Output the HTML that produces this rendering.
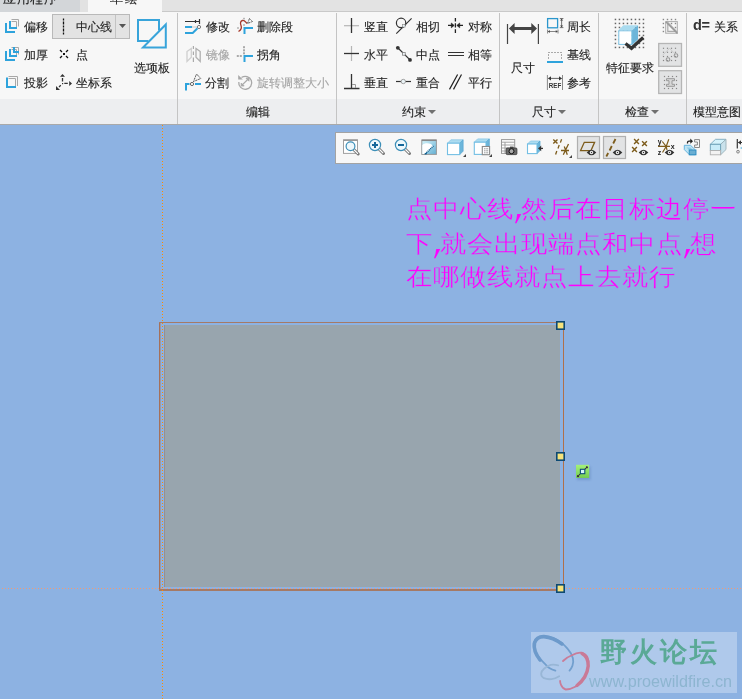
<!DOCTYPE html>
<html><head><meta charset="utf-8">
<style>
html,body{margin:0;padding:0;width:742px;height:699px;overflow:hidden;background:#8db2e2;font-family:"Liberation Sans",sans-serif;}
.a{position:absolute;}
.t{position:absolute;will-change:transform;font-size:12px;line-height:12px;color:#222;white-space:nowrap;-webkit-text-stroke:0.12px #222;}
.dis{color:#a5a5a5;-webkit-text-stroke-color:#a5a5a5;}
svg{position:absolute;overflow:visible;}
#tabs{position:absolute;left:0;top:0;width:742px;height:12px;background:#e3e3e3;}
#ribbon{position:absolute;left:0;top:12px;width:742px;height:112px;background:#f7f7f7;}
#lbar{position:absolute;left:0;top:99px;width:742px;height:25px;background:#edeef0;}
#rbot{position:absolute;left:0;top:124px;width:742px;height:1px;background:#a9a9a9;}
.sep{position:absolute;top:13px;width:1px;height:111px;background:#c4c4c4;}
.lbl{position:absolute;will-change:transform;top:106px;font-size:12px;line-height:12px;color:#222;white-space:nowrap;-webkit-text-stroke:0.12px #222;}
.tri{display:inline-block;width:0;height:0;border-left:4px solid transparent;border-right:4px solid transparent;border-top:4px solid #707070;vertical-align:middle;margin-left:2px;position:relative;top:-1px;}
.note{position:absolute;left:406px;color:#ff00ff;-webkit-text-stroke:0.4px #8db2e2;font-size:24px;line-height:24px;font-weight:300;white-space:nowrap;}
.note i{font-style:normal;display:inline-block;text-align:center;}
.nch{width:27px;transform:scaleX(1.1);}
.ncs{position:static;display:inline-block;vertical-align:top;overflow:visible;}
.note i{vertical-align:top;}
</style></head><body>
<!-- tabs -->
<div id="tabs"></div>
<div class="a" style="left:0;top:0;width:80px;height:12px;background:#d3d6d9"></div>
<div class="a" style="left:80px;top:0;width:8px;height:12px;background:#e2e2e2"></div>
<div class="a" style="left:88px;top:0;width:74px;height:12px;background:#f7f7f7"></div>
<div class="a" style="left:162px;top:11px;width:580px;height:1px;background:#c9c9c9"></div>
<div class="t" style="left:3px;top:-8px;font-size:13px;line-height:13px;letter-spacing:0.5px">应用程序</div>
<div class="t" style="left:110px;top:-8px;font-size:13px;line-height:13px;letter-spacing:2px">草绘</div>

<div id="ribbon"></div>
<div id="lbar"></div>
<div id="rbot"></div>
<div class="sep" style="left:177px"></div>
<div class="sep" style="left:336px"></div>
<div class="sep" style="left:499px"></div>
<div class="sep" style="left:598px"></div>
<div class="sep" style="left:686px"></div>

<div class="a" style="left:52px;top:14px;width:76px;height:23px;border:1px solid #b9b9b9;background:#e3e3e3"></div>
<div class="a" style="left:115px;top:15px;width:1px;height:23px;background:#c3c3c3"></div>
<svg class="a" style="left:0;top:0" width="742" height="699" viewBox="0 0 742 699">
<g fill="none" stroke-linecap="butt">
  <!-- 偏移 -->
  <path d="M11.5 19.5H18.5V26.5M11.5 21.5H16.5V27" stroke="#a8a8a8" stroke-width="1"/>
  <path d="M6 23V32H15M10 21V28H17" stroke="#2ea3dc" stroke-width="2"/>
  <!-- 加厚 -->
  <path d="M11.5 47.5H18.5V54.5M11.5 49.5H16.5V55" stroke="#a8a8a8" stroke-width="1"/>
  <path d="M6 51V60H15M10 49V56H17M14 47V52H19" stroke="#2ea3dc" stroke-width="2"/>
  <!-- 投影 -->
  <path d="M8.5 76.5H17.5V86M8.5 78.5H15.5V86" stroke="#a8a8a8" stroke-width="1"/>
  <path d="M7 77.5V87H16" stroke="#2ea3dc" stroke-width="2"/>
  <!-- 中心线 dotted -->
  <path d="M63.5 18.5V20.5M63.5 21.5V24.5M63.5 25.5V27.5M63.5 28.5V31.5M63.5 32.5V34.5" stroke="#111" stroke-width="1.3"/>
  <path d="M119 24H126L122.5 28Z" fill="#555" stroke="none"/>
  <!-- 点 -->
  <path d="M60 50L62 52M68 50L66 52M60 58L62 56M68 58L66 56" stroke="#111" stroke-width="1.3"/>
  <rect x="63" y="53" width="2" height="2" fill="#111" stroke="none"/>
  <!-- 坐标系 -->
  <path d="M60 76.8H65L62.5 74Z M69.2 81L72 83.4L69.2 86Z M56 86L56 90L60 90Z" fill="#333" stroke="none"/>
  <path d="M62.5 78V81.5M64.3 83.4H67.8M60.8 85.3L59 87" stroke="#333" stroke-width="1.3"/>
  <rect x="62" y="83" width="1.2" height="1.2" fill="#333" stroke="none"/>
  <!-- 选项板 -->
  <path d="M148.5 41H138V20H159V30.5" stroke="#38a4da" stroke-width="2"/>
  <path d="M143 47.6H165.8V24.5Z" stroke="#38a4da" stroke-width="2" stroke-linejoin="miter"/>
  <!-- 修改 -->
  <path d="M185 21.5H199.5M195.5 20V23M199.5 19V24" stroke="#333" stroke-width="1.2"/>
  <path d="M185 27H192M185 33H192.7L197.5 28.3" stroke="#2ea3dc" stroke-width="2"/>
  <path d="M192.5 27H197" stroke="#999" stroke-width="1" stroke-dasharray="1 1"/>
  <circle cx="199" cy="27" r="1.6" fill="#fff" stroke="#777" stroke-width="1"/>
  <!-- 删除段 -->
  <path d="M238.5 31.5C241 30 242 28 241 25.5C240 23 240.5 21 242.5 20.5C244.5 20 245.5 22 247 23.5" stroke="#a63a2c" stroke-width="1.3"/>
  <path d="M249.5 18.5L252.5 21.5L247.5 23.5Z" stroke="#333" stroke-width="1" stroke-dasharray="1 0.7"/>
  <rect x="243.2" y="17.8" width="1.6" height="1.6" fill="#aaa" stroke="none"/>
  <rect x="243.2" y="24.2" width="1.6" height="1.6" fill="#aaa" stroke="none"/>
  <rect x="237.2" y="27.2" width="1.6" height="1.6" fill="#aaa" stroke="none"/>
  <path d="M244.5 34V28H253" stroke="#2ea3dc" stroke-width="2"/>
  <!-- 镜像 -->
  <path d="M193.4 46V49M193.4 51.5V55M193.4 57.5V62" stroke="#aaa" stroke-width="1.2"/>
  <path d="M187 51.5L191.3 48.5V57.2L187 61.5Z" stroke="#cfcfcf" stroke-width="1.3"/>
  <path d="M200.2 51.5L196 48.5V57.2L200.2 61.5Z" stroke="#b0b0b0" stroke-width="1.3"/>
  <!-- 拐角 -->
  <rect x="243" y="46.2" width="2" height="2" fill="#aaa" stroke="none"/>
  <rect x="243" y="49.3" width="2" height="2" fill="#aaa" stroke="none"/>
  <rect x="243" y="52.3" width="2" height="2" fill="#aaa" stroke="none"/>
  <rect x="236.8" y="55" width="2" height="2" fill="#aaa" stroke="none"/>
  <rect x="239.8" y="55" width="2" height="2" fill="#aaa" stroke="none"/>
  <path d="M244.5 62V56H253" stroke="#2ea3dc" stroke-width="2"/>
  <!-- 分割 -->
  <path d="M186 90.5V84H189.5M195 84H201" stroke="#2ea3dc" stroke-width="2"/>
  <circle cx="192" cy="84" r="1.6" fill="#fff" stroke="#666" stroke-width="1"/>
  <path d="M196.5 74L200.8 78.5L193.5 81.5Z" stroke="#333" stroke-width="1" stroke-dasharray="1 0.7"/>
  <!-- 旋转调整大小 -->
  <path d="M241.5 77.5A6.5 6.5 0 1 1 238.8 82" stroke="#a8a8a8" stroke-width="1.3"/>
  <path d="M238.2 75V79.6H242.8Z" fill="#a8a8a8" stroke="none"/>
  <path d="M242 85.2L248.2 79" stroke="#a8a8a8" stroke-width="1.2"/>
  <path d="M246 78.2H249V81.2Z M241.2 83V86H244.2Z" fill="#a8a8a8" stroke="#a8a8a8" stroke-width="0.8"/>
  <!-- 竖直 水平 垂直 -->
  <path d="M344 25.7H359" stroke="#b5b5b5" stroke-width="1.2"/>
  <path d="M351.5 18V33" stroke="#333" stroke-width="1.3"/>
  <path d="M351.5 46V61" stroke="#b5b5b5" stroke-width="1.2"/>
  <path d="M344 53.5H359" stroke="#333" stroke-width="1.3"/>
  <path d="M351.5 74V88.5M344 88.5H359.5" stroke="#333" stroke-width="1.3"/>
  <path d="M352 84.5H355.5V88" stroke="#999" stroke-width="1"/>
  <!-- 相切 -->
  <circle cx="401.1" cy="22.9" r="4.7" stroke="#333" stroke-width="1.2"/>
  <path d="M396.3 33.6L411.6 18.3" stroke="#333" stroke-width="1.2"/>
  <rect x="402.5" y="24.5" width="2.6" height="2.6" fill="#eaf4f8" stroke="#888" stroke-width="0.6"/>
  <!-- 中点 -->
  <path d="M397.8 47.8L410 59.9" stroke="#333" stroke-width="1.2"/>
  <circle cx="397.8" cy="47.8" r="1.9" fill="#333" stroke="none"/>
  <circle cx="410" cy="59.9" r="1.9" fill="#333" stroke="none"/>
  <rect x="402.4" y="52.4" width="2.8" height="2.8" fill="#f0f6f8" stroke="#777" stroke-width="0.7"/>
  <!-- 重合 -->
  <path d="M396 81.5H411" stroke="#333" stroke-width="1.2"/>
  <circle cx="403.3" cy="81.5" r="2.2" fill="#eaf3f6" stroke="#999" stroke-width="0.9"/>
  <!-- 对称 -->
  <path d="M455.4 18V21.5M455.4 23.3V27.5M455.4 29.3V33" stroke="#222" stroke-width="1.3"/>
  <path d="M448 25.4H453M463 25.4H458" stroke="#222" stroke-width="1.3"/>
  <path d="M451.3 23L454.2 25.4L451.3 27.8Z M459.7 23L456.8 25.4L459.7 27.8Z" fill="#222" stroke="#222" stroke-width="0.6"/>
  <!-- 相等 -->
  <path d="M448 52.5H464M448 55.5H464" stroke="#333" stroke-width="1.2"/>
  <!-- 平行 -->
  <path d="M449.5 89.4L457.6 74.5M453.5 89.4L461.5 74.5" stroke="#222" stroke-width="1.2"/>
  <!-- 尺寸 big -->
  <path d="M507.5 24V44M538.4 24V44" stroke="#444" stroke-width="1.2"/>
  <path d="M514 28.5H532" stroke="#444" stroke-width="3"/>
  <path d="M508.9 28.5L514.6 23V34Z M537 28.5L531.3 23V34Z" fill="#444" stroke="none"/>
  <!-- 周长 -->
  <rect x="547.6" y="18.6" width="10" height="9.2" stroke="#2a96cc" stroke-width="1.3"/>
  <path d="M561.6 19V27.5M559.8 18.5H563.4M559.8 27.6H563.4" stroke="#666" stroke-width="0.9"/>
  <path d="M560 20.5H563.2L561.6 18.8Z M560 25.6H563.2L561.6 27.3Z" fill="#444" stroke="none"/>
  <path d="M548 31.5H557.5M547.6 29.5V33.5M558 29.5V33.5" stroke="#777" stroke-width="0.9"/>
  <path d="M549.8 30L548.1 31.5L549.8 33Z M555.8 30L557.5 31.5L555.8 33Z" fill="#444" stroke="none"/>
  <!-- 基线 -->
  <path d="M548 52.5H562" stroke="#aaa" stroke-width="1" stroke-dasharray="2 1"/>
  <path d="M548.5 54V60M561.5 54V60" stroke="#aaa" stroke-width="1" stroke-dasharray="2 1"/>
  <path d="M547 62H563" stroke="#2ea3dc" stroke-width="2"/>
  <!-- 参考 -->
  <path d="M547.4 75V90M562.5 75V90" stroke="#888" stroke-width="1"/>
  <path d="M548.5 78.4H561.5" stroke="#555" stroke-width="0.9"/>
  <path d="M548 78.4L551 76.2V80.6Z M562 78.4L559 76.2V80.6Z" fill="#333" stroke="none"/>
  <text x="548.8" y="88" font-family="Liberation Sans" font-weight="bold" font-size="6.3" fill="#333" stroke="none" textLength="12.4" lengthAdjust="spacingAndGlyphs">REF</text>
  <!-- 特征要求 dots -->
  <g fill="#777" stroke="none">
  </g>
</g>
</svg>


<svg class="a" style="left:0;top:0" width="742" height="699" viewBox="0 0 742 699">
 <g fill="#666"><rect x="614.7" y="18.7" width="1.5" height="1.5"/><rect x="614.7" y="22.7" width="1.5" height="1.5"/><rect x="614.7" y="26.7" width="1.5" height="1.5"/><rect x="614.7" y="30.7" width="1.5" height="1.5"/><rect x="614.7" y="34.7" width="1.5" height="1.5"/><rect x="614.7" y="38.7" width="1.5" height="1.5"/><rect x="614.7" y="42.7" width="1.5" height="1.5"/><rect x="614.7" y="46.7" width="1.5" height="1.5"/><rect x="618.7" y="18.7" width="1.5" height="1.5"/><rect x="618.7" y="22.7" width="1.5" height="1.5"/><rect x="618.7" y="26.7" width="1.5" height="1.5"/><rect x="618.7" y="30.7" width="1.5" height="1.5"/><rect x="618.7" y="34.7" width="1.5" height="1.5"/><rect x="618.7" y="38.7" width="1.5" height="1.5"/><rect x="618.7" y="42.7" width="1.5" height="1.5"/><rect x="618.7" y="46.7" width="1.5" height="1.5"/><rect x="622.7" y="18.7" width="1.5" height="1.5"/><rect x="622.7" y="22.7" width="1.5" height="1.5"/><rect x="622.7" y="26.7" width="1.5" height="1.5"/><rect x="622.7" y="30.7" width="1.5" height="1.5"/><rect x="622.7" y="34.7" width="1.5" height="1.5"/><rect x="622.7" y="38.7" width="1.5" height="1.5"/><rect x="622.7" y="42.7" width="1.5" height="1.5"/><rect x="622.7" y="46.7" width="1.5" height="1.5"/><rect x="626.7" y="18.7" width="1.5" height="1.5"/><rect x="626.7" y="22.7" width="1.5" height="1.5"/><rect x="626.7" y="26.7" width="1.5" height="1.5"/><rect x="626.7" y="30.7" width="1.5" height="1.5"/><rect x="626.7" y="34.7" width="1.5" height="1.5"/><rect x="626.7" y="38.7" width="1.5" height="1.5"/><rect x="626.7" y="42.7" width="1.5" height="1.5"/><rect x="626.7" y="46.7" width="1.5" height="1.5"/><rect x="630.7" y="18.7" width="1.5" height="1.5"/><rect x="630.7" y="22.7" width="1.5" height="1.5"/><rect x="630.7" y="26.7" width="1.5" height="1.5"/><rect x="630.7" y="30.7" width="1.5" height="1.5"/><rect x="630.7" y="34.7" width="1.5" height="1.5"/><rect x="630.7" y="38.7" width="1.5" height="1.5"/><rect x="630.7" y="42.7" width="1.5" height="1.5"/><rect x="630.7" y="46.7" width="1.5" height="1.5"/><rect x="634.7" y="18.7" width="1.5" height="1.5"/><rect x="634.7" y="22.7" width="1.5" height="1.5"/><rect x="634.7" y="26.7" width="1.5" height="1.5"/><rect x="634.7" y="30.7" width="1.5" height="1.5"/><rect x="634.7" y="34.7" width="1.5" height="1.5"/><rect x="634.7" y="38.7" width="1.5" height="1.5"/><rect x="634.7" y="42.7" width="1.5" height="1.5"/><rect x="634.7" y="46.7" width="1.5" height="1.5"/><rect x="638.7" y="18.7" width="1.5" height="1.5"/><rect x="638.7" y="22.7" width="1.5" height="1.5"/><rect x="638.7" y="26.7" width="1.5" height="1.5"/><rect x="638.7" y="30.7" width="1.5" height="1.5"/><rect x="638.7" y="34.7" width="1.5" height="1.5"/><rect x="638.7" y="38.7" width="1.5" height="1.5"/><rect x="638.7" y="42.7" width="1.5" height="1.5"/><rect x="638.7" y="46.7" width="1.5" height="1.5"/><rect x="642.7" y="18.7" width="1.5" height="1.5"/><rect x="642.7" y="22.7" width="1.5" height="1.5"/><rect x="642.7" y="26.7" width="1.5" height="1.5"/><rect x="642.7" y="30.7" width="1.5" height="1.5"/><rect x="642.7" y="34.7" width="1.5" height="1.5"/><rect x="642.7" y="38.7" width="1.5" height="1.5"/><rect x="642.7" y="42.7" width="1.5" height="1.5"/><rect x="642.7" y="46.7" width="1.5" height="1.5"/></g>
 <path d="M618.3 30.3L623.4 25.2H638L632 30.3Z" fill="#a9dbef"/>
 <path d="M632 30.3L638 25.2V39.5L632 44.9Z" fill="#6cb5d9"/>
 <rect x="618.8" y="30.8" width="13" height="13.6" fill="#fff" stroke="#7cc3e4" stroke-width="1"/>
 <path d="M625.5 43.5L631.5 48.3L643.2 37.5" fill="none" stroke="#333" stroke-width="3.2" stroke-linejoin="miter"/>
 <g fill="#888"><rect x="662.7" y="18.8" width="1.4" height="1.4"/><rect x="666.8" y="18.8" width="1.4" height="1.4"/><rect x="670.8" y="18.8" width="1.4" height="1.4"/><rect x="674.8" y="18.8" width="1.4" height="1.4"/><rect x="662.7" y="22.8" width="1.4" height="1.4"/><rect x="662.7" y="26.8" width="1.4" height="1.4"/><rect x="662.7" y="30.8" width="1.4" height="1.4"/><rect x="670.8" y="22.8" width="1.4" height="1.4"/><rect x="674.8" y="22.8" width="1.4" height="1.4"/><rect x="674.8" y="26.8" width="1.4" height="1.4"/></g>
 <rect x="665.7" y="21.6" width="11.6" height="11.6" fill="none" stroke="#aaa" stroke-width="1"/>
 <path d="M667.8 22.5V31.3H676.5Z" fill="none" stroke="#aaa" stroke-width="1.2"/>
 <path d="M665.8 21.8L677.5 33.5" stroke="#999" stroke-width="1.5"/>
 <rect x="658.7" y="43.5" width="22.8" height="22.8" fill="#e2e3e4" stroke="#b5b5b5" stroke-width="1.3"/>
 <rect x="658.7" y="70.7" width="22.8" height="22.8" fill="#e2e3e4" stroke="#b5b5b5" stroke-width="1.3"/>
 <g fill="#888"><rect x="662.9" y="47.7" width="1.2" height="1.2"/><rect x="662.9" y="51.7" width="1.2" height="1.2"/><rect x="662.9" y="55.9" width="1.2" height="1.2"/><rect x="662.9" y="59.9" width="1.2" height="1.2"/><rect x="666.9" y="47.7" width="1.2" height="1.2"/><rect x="666.9" y="51.7" width="1.2" height="1.2"/><rect x="666.9" y="55.9" width="1.2" height="1.2"/><rect x="666.9" y="59.9" width="1.2" height="1.2"/><rect x="670.9" y="47.7" width="1.2" height="1.2"/><rect x="670.9" y="51.7" width="1.2" height="1.2"/><rect x="670.9" y="55.9" width="1.2" height="1.2"/><rect x="670.9" y="59.9" width="1.2" height="1.2"/><rect x="674.9" y="47.7" width="1.2" height="1.2"/><rect x="674.9" y="51.7" width="1.2" height="1.2"/><rect x="674.9" y="55.9" width="1.2" height="1.2"/><rect x="674.9" y="59.9" width="1.2" height="1.2"/></g>
 <path d="M662.5 55.3L669.5 48.3L675.5 54.3" fill="none" stroke="#c8c8c8" stroke-width="0.9"/>
 <circle cx="676" cy="55.5" r="1.8" fill="none" stroke="#999" stroke-width="1.1"/>
 <circle cx="668" cy="59.5" r="1.8" fill="none" stroke="#999" stroke-width="1.1"/>
 <g fill="#888"><rect x="663.9" y="75.9" width="1.2" height="1.2"/><rect x="663.9" y="79.9" width="1.2" height="1.2"/><rect x="663.9" y="83.9" width="1.2" height="1.2"/><rect x="663.9" y="87.9" width="1.2" height="1.2"/><rect x="667.9" y="75.9" width="1.2" height="1.2"/><rect x="667.9" y="87.9" width="1.2" height="1.2"/><rect x="671.9" y="75.9" width="1.2" height="1.2"/><rect x="671.9" y="87.9" width="1.2" height="1.2"/><rect x="675.9" y="75.9" width="1.2" height="1.2"/><rect x="675.9" y="79.9" width="1.2" height="1.2"/><rect x="675.9" y="83.9" width="1.2" height="1.2"/><rect x="675.9" y="87.9" width="1.2" height="1.2"/></g>
 <path d="M666.5 78.7H674.5V80.7H672V84.3H674.5V86.3H666.5V84.3H669V80.7H666.5Z" fill="#d8d8d8" stroke="#999" stroke-width="1"/>
</svg>
<!-- group 1 -->
<div class="t" style="left:24px;top:21px">偏移</div>
<div class="t" style="left:24px;top:49px">加厚</div>
<div class="t" style="left:24px;top:77px">投影</div>
<div class="t" style="left:76px;top:21px">中心线</div>
<div class="t" style="left:76px;top:49px">点</div>
<div class="t" style="left:76px;top:77px">坐标系</div>
<div class="t" style="left:134px;top:62px">选项板</div>

<!-- group 2 -->
<div class="t" style="left:206px;top:21px">修改</div>
<div class="t" style="left:206px;top:49px" ><span class="dis">镜像</span></div>
<div class="t" style="left:205px;top:77px">分割</div>
<div class="t" style="left:257px;top:21px">删除段</div>
<div class="t" style="left:257px;top:49px">拐角</div>
<div class="t dis" style="left:257px;top:77px">旋转调整大小</div>
<div class="lbl" style="left:246px">编辑</div>

<!-- group 3 -->
<div class="t" style="left:364px;top:21px">竖直</div>
<div class="t" style="left:364px;top:49px">水平</div>
<div class="t" style="left:364px;top:77px">垂直</div>
<div class="t" style="left:416px;top:21px">相切</div>
<div class="t" style="left:416px;top:49px">中点</div>
<div class="t" style="left:416px;top:77px">重合</div>
<div class="t" style="left:468px;top:21px">对称</div>
<div class="t" style="left:468px;top:49px">相等</div>
<div class="t" style="left:468px;top:77px">平行</div>
<div class="lbl" style="left:402px">约束<span class="tri"></span></div>

<!-- group 4 -->
<div class="t" style="left:511px;top:62px">尺寸</div>
<div class="t" style="left:567px;top:21px">周长</div>
<div class="t" style="left:567px;top:49px">基线</div>
<div class="t" style="left:567px;top:77px">参考</div>
<div class="lbl" style="left:532px">尺寸<span class="tri"></span></div>

<!-- group 5 -->
<div class="t" style="left:606px;top:62px">特征要求</div>
<div class="lbl" style="left:625px">检查<span class="tri"></span></div>

<!-- group 6 -->
<div class="t" style="left:693px;top:19px;font-weight:bold;font-size:14.5px;letter-spacing:-0.3px;color:#333;-webkit-text-stroke:0">d=</div>
<div class="t" style="left:714px;top:21px">关系</div>
<div class="lbl" style="left:693px">模型意图</div>

<!-- floating toolbar -->
<div class="a" style="left:335px;top:132px;width:420px;height:30px;border:1px solid #a3a3a3;background:#f7f7f7"></div>

<svg class="a" style="left:0;top:0" width="742" height="699" viewBox="0 0 742 699">
 <rect x="577.5" y="136.5" width="22" height="22" fill="#e2e3e4" stroke="#b0b0b0" stroke-width="1.2"/>
 <rect x="603.5" y="136.5" width="22" height="22" fill="#e2e3e4" stroke="#b0b0b0" stroke-width="1.2"/>
 <!-- T1 -->
 <rect x="343.5" y="139.8" width="14" height="13.6" fill="#fff" stroke="#a0a0a0" stroke-width="1"/>
 <path d="M343.5 140.3H357.5" stroke="#999" stroke-width="1.4"/>
 <path d="M353.6 149.4L358.2 154.0" stroke="#777" stroke-width="3" stroke-linecap="round"/>
 <path d="M354.2 150.0L357.6 153.4" stroke="#fff" stroke-width="1.2" stroke-linecap="round"/>
 <circle cx="350.5" cy="146.3" r="4.4" fill="#eef8fc" stroke="#3d8fb8" stroke-width="1.2"/>
 <path d="M378.9 148.9L383.5 153.5" stroke="#777" stroke-width="3" stroke-linecap="round"/>
 <path d="M379.5 149.5L382.9 152.9" stroke="#fff" stroke-width="1.2" stroke-linecap="round"/>
 <circle cx="375" cy="145" r="5.6" fill="#eef8fc" stroke="#3d8fb8" stroke-width="1.2"/><path d="M372 145H378M375 142V148" stroke="#15679a" stroke-width="2"/>
 <path d="M404.9 148.9L409.5 153.5" stroke="#777" stroke-width="3" stroke-linecap="round"/>
 <path d="M405.5 149.5L408.9 152.9" stroke="#fff" stroke-width="1.2" stroke-linecap="round"/>
 <circle cx="401" cy="145" r="5.6" fill="#eef8fc" stroke="#3d8fb8" stroke-width="1.2"/><path d="M398 145H404" stroke="#15679a" stroke-width="2"/>
 <!-- T4 -->
 <defs><linearGradient id="g4" x1="0" y1="0" x2="1" y2="1"><stop offset="0" stop-color="#d8f6fc"/><stop offset="1" stop-color="#62aed2"/></linearGradient></defs>
 <rect x="421.8" y="140" width="14.6" height="14.4" fill="url(#g4)" stroke="#9a9a9a" stroke-width="1"/>
 <path d="M421.8 140.3H436.4" stroke="#888" stroke-width="1.5"/>
 <path d="M422.3 154V145C424 143 428 142.5 431 144C432 145 433 146 433 147L425 154Z" fill="#fff"/>
 <path d="M425 154L433.5 146" stroke="#0f5f8f" stroke-width="1.4" stroke-dasharray="1.2 0.6"/>
 <path d="M424 154.3L426.5 152.5L427 154.3Z" fill="#0f5f8f"/>
 <!-- T5 -->
 <path d="M447.5 143.2L450.9 139.79999999999998H463.09999999999997L459.7 143.2Z" fill="#acdcf0" stroke="#8cc8e6" stroke-width="0.8"/>
 <path d="M459.7 143.2L463.09999999999997 139.79999999999998V151.2L459.7 154.6Z" fill="#6db6da" stroke="#5aaad4" stroke-width="0.8"/>
 <rect x="447.5" y="143.2" width="12.199999999999989" height="11.400000000000006" fill="#fff" stroke="#74bfe4" stroke-width="1.1"/>
 <path d="M466 157H463L466 154Z" fill="#444"/>
 <!-- T6 -->
 <path d="M474.3 142.2L477.6 138.89999999999998H489.3L486 142.2Z" fill="#acdcf0" stroke="#8cc8e6" stroke-width="0.8"/>
 <path d="M486 142.2L489.3 138.89999999999998V151.1L486 154.4Z" fill="#6db6da" stroke="#5aaad4" stroke-width="0.8"/>
 <rect x="474.3" y="142.2" width="11.699999999999989" height="12.200000000000017" fill="#fff" stroke="#74bfe4" stroke-width="1.1"/>
 <rect x="482.3" y="146.5" width="7.3" height="8.2" fill="#fff" stroke="#8a8a8a" stroke-width="1.1"/>
 <path d="M484.2 148.8H488.2M484.2 150.8H488.2M484.2 152.8H488.2" stroke="#777" stroke-width="0.9" stroke-dasharray="1 0.5"/>
 <path d="M492 157H489L492 154Z" fill="#444"/>
 <!-- T7 -->
 <rect x="501.5" y="139.6" width="13.2" height="13.8" fill="#fff" stroke="#999" stroke-width="1"/>
 <path d="M501.5 142.2H514.7M501.5 145H514.7M501.5 148H514.7M501.5 151H514.7M505 142.2V153.4" stroke="#999" stroke-width="0.9"/>
 <rect x="506.2" y="148" width="10.7" height="6.6" rx="1" fill="#6a6a6a" stroke="#333" stroke-width="0.8"/>
 <rect x="510" y="146.6" width="3.6" height="1.6" fill="#444"/>
 <circle cx="511.5" cy="151.2" r="2.5" fill="#aaa" stroke="#111" stroke-width="1"/>
 <!-- T8 -->
 <path d="M527.5 144L530.5 141H540L537 144Z" fill="#acdcf0" stroke="#8cc8e6" stroke-width="0.8"/>
 <path d="M537 144L540 141V150.6L537 153.6Z" fill="#6db6da" stroke="#5aaad4" stroke-width="0.8"/>
 <rect x="527.5" y="144" width="9.5" height="9.599999999999994" fill="#fff" stroke="#74bfe4" stroke-width="1.1"/>
 <path d="M538.6 148.4H543" stroke="#333" stroke-width="1.3"/>
 <path d="M538.3 148.4L541.2 145.5V151.3Z" fill="#333"/>
 <!-- T9 -->
 <path d="M553.3 139.4L557.5 143.6M557.5 139.4L553.3 143.6" stroke="#7d5c1c" stroke-width="1.4" fill="none"/>
 <path d="M561.6 139.3L560.4 142.6M559.2 145L558 148.5M556.8 151L555.6 154.5M561 150.5H569M564.3 146.5L567.3 154.8M568.5 144L563.3 154.8" stroke="#7d5c1c" stroke-width="1.3" fill="none"/>
 <path d="M572 158H569L572 155Z" fill="#444"/>
 <!-- T10 -->
 <path d="M580.6 150.6L584.3 142.3H594.6L591 150.6Z" fill="none" stroke="#7d5c1c" stroke-width="1.3"/>
 <path d="M586.7 152.5Q591.5 146.9 596.3 152.5Q591.5 158.1 586.7 152.5Z" fill="#333"/>
 <circle cx="591.5" cy="152.5" r="1.7" fill="#fff"/><circle cx="591.5" cy="152.5" r="0.75" fill="#333"/>
 <!-- T11 -->
 <path d="M615.5 139L613.2 143.5M611.8 146L609.6 150.5M608.2 153L606.3 156.5" stroke="#7d5c1c" stroke-width="1.8" fill="none"/>
 <path d="M612.7 152.5Q617.5 146.9 622.3 152.5Q617.5 158.1 612.7 152.5Z" fill="#333"/>
 <circle cx="617.5" cy="152.5" r="1.7" fill="#fff"/><circle cx="617.5" cy="152.5" r="0.75" fill="#333"/>
 <!-- T12 -->
 <path d="M634.1 139.1L638.9 143.9M638.9 139.1L634.1 143.9" stroke="#7d5c1c" stroke-width="1.4" fill="none"/> <path d="M642.1 141.2L646.9 146.0M646.9 141.2L642.1 146.0" stroke="#7d5c1c" stroke-width="1.4" fill="none"/> <path d="M632.1 147.1L636.9 151.9M636.9 147.1L632.1 151.9" stroke="#7d5c1c" stroke-width="1.4" fill="none"/>
 <path d="M638.7 152.5Q643.5 146.9 648.3 152.5Q643.5 158.1 638.7 152.5Z" fill="#333"/>
 <circle cx="643.5" cy="152.5" r="1.7" fill="#fff"/><circle cx="643.5" cy="152.5" r="0.75" fill="#333"/>
 <!-- T13 -->
 <path d="M658 146.3H670M662.3 141.5L666.2 146.5L667 150M668.8 139.3L666.2 146.5L662.5 152.5" stroke="#7d5c1c" stroke-width="1.2" fill="none"/>
 <text x="657.7" y="143.6" font-family="Liberation Sans" font-weight="bold" font-size="7" fill="#222">y</text>
 <text x="657.7" y="154.6" font-family="Liberation Sans" font-weight="bold" font-size="7" fill="#222">z</text>
 <text x="670.8" y="149" font-family="Liberation Sans" font-weight="bold" font-size="7" fill="#222">x</text>
 <path d="M664.7 152.5Q669.5 146.9 674.3 152.5Q669.5 158.1 664.7 152.5Z" fill="#333"/>
 <circle cx="669.5" cy="152.5" r="1.7" fill="#fff"/><circle cx="669.5" cy="152.5" r="0.75" fill="#333"/>
 <!-- T14 -->
 <path d="M687.5 143.5V142.5Q687.5 141.2 689 141.2H691.5" stroke="#222" stroke-width="1.3" fill="none"/>
 <path d="M693 141.2L690.3 138.6V143.8Z" fill="#222"/>
 <path d="M694.6 142V139.6H699.5V147.5H694.6V145M694.6 145H697.4V142H694.6" stroke="#7a7a7a" stroke-width="0.9" fill="none"/>
 <path d="M684.3 145.3H690.5L695.5 150V154.8H689.5L684.3 149.6Z" fill="#bde3f3" stroke="#5aaedc" stroke-width="0.9"/>
 <path d="M686.5 147.5H690.5L693 150H689Z" fill="#8ccbe8"/>
 <rect x="689.2" y="150" width="6.8" height="4.8" fill="#6aaed2" stroke="#2a8ac0" stroke-width="0.9"/>
 <!-- T15 -->
 <path d="M710.3 144.3L715.5 139.3H726L720.6 144.3Z" fill="#d5f3fb" stroke="#7aa8bc" stroke-width="0.9"/>
 <path d="M720.6 144.3L726 139.3V149.5L720.6 154.8Z" fill="#c9e2ec" stroke="#9ab0b8" stroke-width="0.9"/>
 <rect x="710.3" y="144.3" width="10.3" height="6.2" fill="#c8ecf8" stroke="#6a9fb5" stroke-width="0.9"/>
 <rect x="710.3" y="150.5" width="10.3" height="4.3" fill="#f2f2f2" stroke="#b0b0b0" stroke-width="0.9"/>
 <!-- T16 partial -->
 <path d="M737.3 139V148.6" stroke="#333" stroke-width="1.2"/>
 <path d="M742 142.5H738.3" stroke="#333" stroke-width="1"/>
 <path d="M738 142.5L741 140.3V144.7Z" fill="#333"/>
 <circle cx="738" cy="151.7" r="1.4" fill="#ddd" stroke="#777" stroke-width="0.8"/>
 <rect x="740.6" y="147.5" width="1.4" height="1" fill="#2ea3dc"/>
</svg>

<!-- note -->
<div class="note" style="top:197px"><i class="nch">点</i><i class="nch">中</i><i class="nch">心</i><i class="nch">线</i><svg class="ncs" width="7" height="27" viewBox="0 0 7 27"><path d="M3.2 17H7.2L6 19.6L2.4 26.2H1L2.4 22Z" fill="#ff00ff"/></svg><i class="nch">然</i><i class="nch">后</i><i class="nch">在</i><i class="nch">目</i><i class="nch">标</i><i class="nch">边</i><i class="nch">停</i><i class="nch">一</i></div>
<div class="note" style="top:232px"><i class="nch">下</i><svg class="ncs" width="7" height="27" viewBox="0 0 7 27"><path d="M3.2 17H7.2L6 19.6L2.4 26.2H1L2.4 22Z" fill="#ff00ff"/></svg><i class="nch">就</i><i class="nch">会</i><i class="nch">出</i><i class="nch">现</i><i class="nch">端</i><i class="nch">点</i><i class="nch">和</i><i class="nch">中</i><i class="nch">点</i><svg class="ncs" width="7" height="27" viewBox="0 0 7 27"><path d="M3.2 17H7.2L6 19.6L2.4 26.2H1L2.4 22Z" fill="#ff00ff"/></svg><i class="nch">想</i></div>
<div class="note" style="top:265px"><i class="nch">在</i><i class="nch">哪</i><i class="nch">做</i><i class="nch">线</i><i class="nch">就</i><i class="nch">点</i><i class="nch">上</i><i class="nch">去</i><i class="nch">就</i><i class="nch">行</i></div>
<!-- sketch -->
<div class="a" style="left:164px;top:325px;width:396px;height:262px;background:#98a5ae"></div>
<div class="a" style="left:159px;top:322px;width:1px;height:268px;background:#a5705a"></div>
<div class="a" style="left:160px;top:323px;width:1px;height:267px;background:#a88a80;opacity:0.6"></div>
<div class="a" style="left:164px;top:325px;width:1px;height:262px;background:#9a8f8e"></div>
<div class="a" style="left:159px;top:322px;width:405px;height:1px;background:#a57a66"></div>
<div class="a" style="left:563px;top:322px;width:1px;height:268px;background:#b0704a"></div>
<div class="a" style="left:159px;top:589px;width:405px;height:2px;background:#a57a66"></div>
<svg class="a" style="left:0;top:0" width="742" height="699">
  <line x1="162.5" y1="125" x2="162.5" y2="699" stroke="#ff8c00" stroke-width="1" stroke-dasharray="1 2"/>
  <line x1="0" y1="588.5" x2="742" y2="588.5" stroke="#f29a74" stroke-width="1" stroke-dasharray="1 2" stroke-dashoffset="-2"/>
</svg>
<svg class="a" style="left:554px;top:319px" width="13" height="13" viewBox="554 319 13 13"><rect x="556.8" y="321.8" width="7.4" height="7.4" fill="#f6e37c" stroke="#0d4a74" stroke-width="1.6"/></svg>
<svg class="a" style="left:554px;top:450px" width="13" height="13" viewBox="554 450 13 13"><rect x="556.8" y="452.8" width="7.4" height="7.4" fill="#f6e37c" stroke="#0d4a74" stroke-width="1.6"/></svg>
<svg class="a" style="left:554px;top:582px" width="13" height="13" viewBox="554 582 13 13"><rect x="556.8" y="584.8" width="7.4" height="7.4" fill="#f6e37c" stroke="#0d4a74" stroke-width="1.6"/></svg>
<svg class="a" style="left:570px;top:460px" width="26" height="26" viewBox="570 460 26 26">
 <defs><linearGradient id="gg" x1="0" y1="0" x2="0" y2="1"><stop offset="0" stop-color="#a4f27a"/><stop offset="1" stop-color="#74cc52"/></linearGradient>
 <filter id="sh" x="-50%" y="-50%" width="200%" height="200%"><feGaussianBlur stdDeviation="1.2"/></filter></defs>
 <rect x="577" y="466.5" width="13.5" height="13.5" fill="#5a7fb8" opacity="0.45" filter="url(#sh)"/>
 <rect x="576" y="464.8" width="13.2" height="13.2" fill="url(#gg)"/>
 <path d="M577.6 476.6L587.2 467" stroke="#3a2a3a" stroke-width="1.2" stroke-dasharray="1.3 0.8"/>
 <circle cx="578" cy="476.2" r="1.1" fill="#3a2a3a"/><circle cx="586.9" cy="467.3" r="1.1" fill="#3a2a3a"/>
 <rect x="580.4" y="469.3" width="4.4" height="4.4" fill="#d8f8fc" stroke="#0e4d78" stroke-width="1.1"/>
</svg>

<!-- watermark -->
<div class="a" style="left:531px;top:632px;width:206px;height:61px;background:rgba(255,255,255,0.3)"></div>
<svg class="a" style="left:0;top:0" width="742" height="699" viewBox="0 0 742 699" fill="none" stroke-linecap="round">
 <path d="M555.4 670.6C551 669 548 667.5 546.9 665.9C541 660 536.5 655 535.6 651.7C533.5 647 533 644 534 642.3C536 637.5 539 636.8 542.2 636.6C546 636 550 637 554.4 638.5C560 641 564.5 645 567.7 648.9C570.5 652 572 655 572.9 658.3C573.5 661 573.2 664 572.4 665.9C571.6 668 570.5 669.5 569.5 670.6" stroke="#729fce" stroke-width="1.8"/>
 <path d="M540 660C535.5 654 533.5 648 534.5 643C536 638 540 636.5 544 636.6C550 637 556 639.5 562 644" stroke="#6d9acb" stroke-width="3.6"/>
 <path d="M563 661C566 658 568.5 656.5 571.4 655.5C575 653.5 578 652.5 580.9 652.7C584 653.5 586.5 655 587.5 657.4C588.8 660 588.8 663 588.4 665.9C587.5 670 586.5 674 584.7 677.2C582 681.5 578.5 685 575.2 686.7C572 688.5 569 689.5 565.8 689.5C563.5 689 562 687 561 684.8C560.3 683.5 560.1 682 560.1 681" stroke="#c97c98" stroke-width="1.8"/>
 <path d="M582 653.5C586 655.5 588.3 660 588.2 666C587.5 673 584 680 577 685.5" stroke="#c97a96" stroke-width="3.4"/>
 <path d="M559.2 676.3C556.5 678 554 679 551.6 679.1C548.5 679.5 546 679 544 678.2C542 677 541 675 541.2 673.4C541.5 671 542.5 670 544 668.7C546 667 548.5 665.5 550.7 664.9C553 664.5 556 664.8 558.2 665.4" stroke="#98b6d6" stroke-width="1.8"/>
</svg>
<div class="a" style="left:600px;top:637px;font-size:27px;line-height:30px;font-weight:bold;color:#5aa996;letter-spacing:3px">野火论坛</div>
<div class="a" style="left:589px;top:671px;font-size:16.2px;line-height:20px;color:#8db5d0">www.proewildfire.cn</div>
</body></html>
